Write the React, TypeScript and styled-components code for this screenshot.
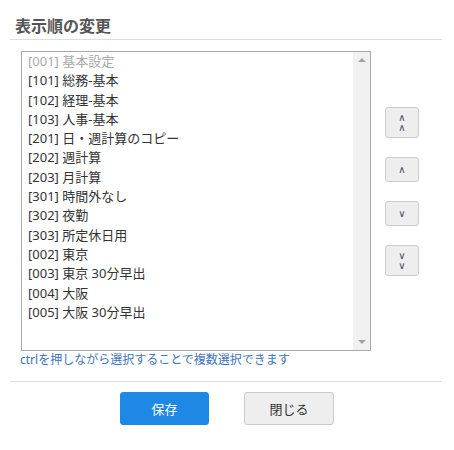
import React from "react";
import styled, { createGlobalStyle } from "styled-components";

const Global = createGlobalStyle`
  html, body { margin: 0; padding: 0; background: #fff; }
  body { font-family: "Noto Sans", "Noto Sans CJK JP", sans-serif; color: #333; }
`;

const Page = styled.div`
  width: 454px;
  padding: 0 12px 0 10px;
  box-sizing: border-box;
`;

const Header = styled.div`
  padding: 15px 0 4px 5px;
  border-bottom: 1px solid #ddd;
`;

const Title = styled.h1`
  margin: 0;
  font-size: 16px;
  line-height: 20px;
  font-weight: bold;
  color: #555;
  font-family: "Noto Sans CJK JP", sans-serif;
`;

const Body = styled.div`
  padding: 11px 0 0 11px;
  border-bottom: 1px solid #ddd;
  padding-bottom: 13px;
`;

const Row = styled.div`
  display: flex;
  align-items: flex-start;
`;

const ListFrame = styled.div`
  width: 350px;
  height: 300px;
  box-sizing: border-box;
  border: 1px solid #aaa;
  display: flex;
  background: #fff;
`;

const ListArea = styled.div`
  flex: 1;
  overflow: hidden;
  padding: 0 0 0 6px;
`;

const ScrollTrack = styled.div`
  width: 17px;
  background: #f1f1f1;
  display: flex;
  flex-direction: column;
  justify-content: space-between;
  align-items: center;
  padding: 6px 0;
  box-sizing: border-box;
`;

const Arrow = styled.span<{ $down?: boolean }>`
  width: 0;
  height: 0;
  border-left: 4px solid transparent;
  border-right: 4px solid transparent;
  ${(p) =>
    p.$down
      ? "border-top: 4px solid #a3a3a3;"
      : "border-bottom: 4px solid #a3a3a3;"}
`;

const Item = styled.div<{ $disabled?: boolean }>`
  font-size: 13px;
  line-height: 19.3px;
  white-space: nowrap;
  color: ${(p) => (p.$disabled ? "#aaa" : "#333")};
  font-family: "Noto Sans", "Noto Sans CJK JP", sans-serif;
`;

const SideButtons = styled.div`
  display: flex;
  flex-direction: column;
  gap: 19px;
  margin: 56px 0 0 14px;
`;

const MoveButton = styled.button<{ $tall?: boolean }>`
  width: 34px;
  height: ${(p) => (p.$tall ? 31 : 25)}px;
  box-sizing: border-box;
  padding: 0;
  border: 1px solid #ccc;
  border-radius: 3px;
  background: #eee;
  color: #4a4a5a;
  font-family: "DejaVu Sans", sans-serif;
  font-size: 10px;
  line-height: 9.5px;
  display: flex;
  flex-direction: column;
  align-items: center;
  justify-content: center;
`;

const Hint = styled.div`
  margin-top: 1px;
  margin-left: -1px;
  font-size: 12px;
  line-height: 16px;
  color: #3a74bb;
  font-family: "Noto Sans", "Noto Sans CJK JP", sans-serif;
`;

const Footer = styled.div`
  display: flex;
  justify-content: center;
  gap: 35px;
  padding-top: 10px;
  padding-left: 2px;
`;

const ActionButton = styled.button<{ $primary?: boolean }>`
  width: ${(p) => (p.$primary ? 89 : 90)}px;
  height: 33px;
  box-sizing: border-box;
  border-radius: 3px;
  border: 1px solid ${(p) => (p.$primary ? "#1e88e5" : "#ccc")};
  background: ${(p) => (p.$primary ? "#1e88e5" : "#eee")};
  color: ${(p) => (p.$primary ? "#fff" : "#333")};
  font-size: 13px;
  font-family: "Noto Sans CJK JP", sans-serif;
  padding: 0;
`;

const items = [
  "[001] 基本設定",
  "[101] 総務-基本",
  "[102] 経理-基本",
  "[103] 人事-基本",
  "[201] 日・週計算のコピー",
  "[202] 週計算",
  "[203] 月計算",
  "[301] 時間外なし",
  "[302] 夜勤",
  "[303] 所定休日用",
  "[002] 東京",
  "[003] 東京 30分早出",
  "[004] 大阪",
  "[005] 大阪 30分早出",
];

export default function App() {
  return (
    <Page>
      <Global />
      <Header>
        <Title>表示順の変更</Title>
      </Header>
      <Body>
        <Row>
          <ListFrame>
            <ListArea role="listbox" aria-multiselectable="true">
              {items.map((t, i) => (
                <Item key={t} $disabled={i === 0} role="option">
                  {t}
                </Item>
              ))}
            </ListArea>
            <ScrollTrack>
              <Arrow />
              <Arrow $down />
            </ScrollTrack>
          </ListFrame>
          <SideButtons>
            <MoveButton $tall>
              <span>∧</span>
              <span>∧</span>
            </MoveButton>
            <MoveButton>
              <span>∧</span>
            </MoveButton>
            <MoveButton>
              <span>∨</span>
            </MoveButton>
            <MoveButton $tall>
              <span>∨</span>
              <span>∨</span>
            </MoveButton>
          </SideButtons>
        </Row>
        <Hint>ctrlを押しながら選択することで複数選択できます</Hint>
      </Body>
      <Footer>
        <ActionButton $primary>保存</ActionButton>
        <ActionButton>閉じる</ActionButton>
      </Footer>
    </Page>
  );
}
